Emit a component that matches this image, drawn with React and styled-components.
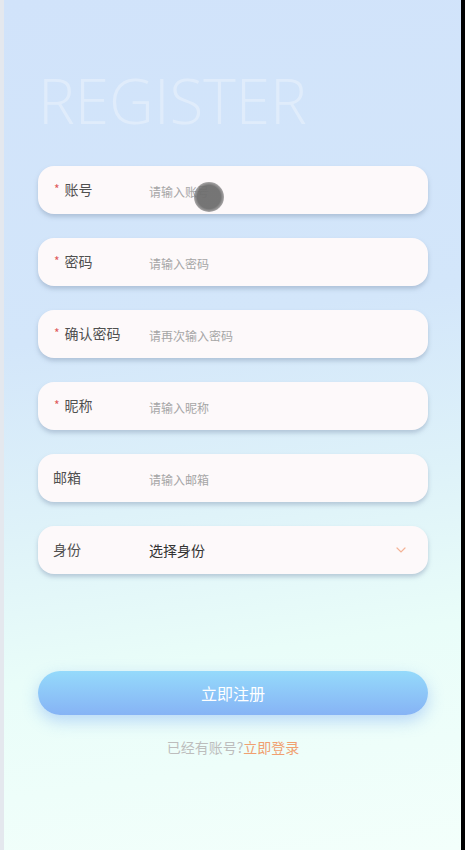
import React from 'react';
import styled, { createGlobalStyle } from 'styled-components';

const GlobalStyle = createGlobalStyle`
  html, body {
    margin: 0;
    padding: 0;
    background: #e6eaf0;
  }
  * {
    box-sizing: border-box;
  }
`;

const Frame = styled.div`
  display: flex;
  width: 465px;
  height: 850px;
  overflow: hidden;
`;

const LeftEdge = styled.div`
  width: 4px;
  background: #e4e8ee;
`;

const RightEdge = styled.div`
  width: 4px;
  background: #000;
`;

const Page = styled.main`
  position: relative;
  flex: 1;
  display: flex;
  flex-direction: column;
  padding: 69px 33px 0 34px;
  background: linear-gradient(172deg, #d1e3fa 0%, #d3e6fa 38%, #def2f9 58%, #e9fdf9 75%, #f3fffb 100%);
  font-family: "Noto Sans CJK SC", "Noto Sans", sans-serif;
`;

const Title = styled.h1`
  margin: 0 0 35px;
  font-family: "Open Sans", "Noto Sans", sans-serif;
  font-weight: 300;
  font-size: 62px;
  line-height: 1;
  height: 62px;
  color: rgba(255, 255, 255, 0.32);
`;

const Form = styled.div`
  display: flex;
  flex-direction: column;
  gap: 24px;
`;

const Field = styled.label`
  position: relative;
  display: flex;
  align-items: center;
  height: 48px;
  padding: 0 22px 0 15px;
  border-radius: 16px;
  background: #fdf9fa;
  box-shadow: 0 3px 4px rgba(140, 160, 185, 0.5);
`;

const Label = styled.span`
  display: flex;
  align-items: center;
  width: 96px;
  flex-shrink: 0;
  margin-top: -2px;
  font-size: 14px;
  color: #505050;
`;

const Star = styled.span`
  color: #e05a5a;
  font-size: 12px;
  margin: 0 5px 0 1px;
  position: relative;
  top: -1px;
`;

const Input = styled.input`
  flex: 1;
  border: none;
  outline: none;
  background: transparent;
  font-family: inherit;
  font-size: 12px;
  color: #333;
  padding: 3px 0 0;
  &::placeholder {
    color: #a6a6a6;
  }
`;

const SelectValue = styled.span`
  flex: 1;
  font-size: 14px;
  color: #333;
`;

const Chevron = styled.svg`
  width: 10px;
  height: 6px;
`;

const Submit = styled.button`
  margin-top: 97px;
  height: 44px;
  border: none;
  border-radius: 22px;
  background: linear-gradient(180deg, #95dafb 0%, #86b3f5 100%);
  box-shadow: 0 6px 16px rgba(120, 170, 245, 0.45);
  color: #fff;
  font-family: inherit;
  font-size: 16px;
  cursor: pointer;
`;

const Footer = styled.p`
  margin: 22px 0 0;
  text-align: center;
  font-size: 14px;
  color: #bdbdbd;
`;

const LoginLink = styled.span`
  color: #f0a070;
`;

const TouchCursor = styled.div`
  position: absolute;
  left: 190px;
  top: 182px;
  width: 30px;
  height: 30px;
  border-radius: 50%;
  background: radial-gradient(circle, rgba(110, 110, 110, 0.95) 55%, rgba(110, 110, 110, 0.5) 75%, rgba(110, 110, 110, 0) 100%);
  pointer-events: none;
`;

const fields = [
  { label: '账号', placeholder: '请输入账号', required: true },
  { label: '密码', placeholder: '请输入密码', required: true, type: 'password' },
  { label: '确认密码', placeholder: '请再次输入密码', required: true, type: 'password' },
  { label: '昵称', placeholder: '请输入昵称', required: true },
  { label: '邮箱', placeholder: '请输入邮箱' },
];

const App = () => {
  return (
    <>
      <GlobalStyle />
      <Frame>
        <LeftEdge />
        <Page>
          <Title>REGISTER</Title>
          <Form>
            {fields.map(f => (
              <Field key={f.label}>
                <Label>
                  {f.required && <Star>*</Star>}
                  {f.label}
                </Label>
                <Input type={f.type || 'text'} placeholder={f.placeholder} />
              </Field>
            ))}
            <Field>
              <Label>身份</Label>
              <SelectValue>选择身份</SelectValue>
              <Chevron viewBox="0 0 10 6">
                <path d="M1 1 L5 5 L9 1" fill="none" stroke="#f4b396" strokeWidth="1.2" strokeLinecap="round" />
              </Chevron>
            </Field>
          </Form>
          <Submit>立即注册</Submit>
          <Footer>
            已经有账号?<LoginLink>立即登录</LoginLink>
          </Footer>
          <TouchCursor />
        </Page>
        <RightEdge />
      </Frame>
    </>
  );
};

export default App;
